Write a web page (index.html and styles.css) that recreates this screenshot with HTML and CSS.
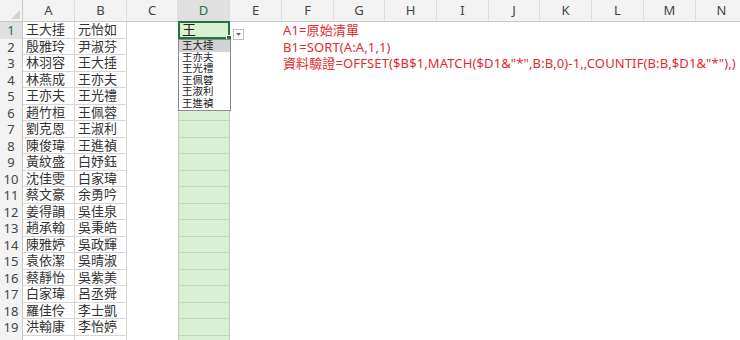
FILE: index.html
```html
<!DOCTYPE html>
<html>
	<head>
		<meta charset="utf-8">
		<title>資料驗證 - 下拉清單</title>
		<link rel="stylesheet" href="styles.css">
	</head>
	<body>
		<div class="sheet">
			<div class="colhdr">
				<div class="corner"><svg width="9" height="9" viewBox="0 0 9 9"><polygon points="9,0 9,9 0,9" fill="#d2d2d2"/></svg></div>
				<div>A</div><div>B</div><div>C</div><div class="on">D</div><div>E</div><div>F</div><div>G</div>
				<div>H</div><div>I</div><div>J</div><div>K</div><div>L</div><div>M</div><div>N</div>
			</div>

			<div class="row">
				<div class="rh on">1</div><div class="c">王大捶</div><div class="c">元怡如</div><div></div>
				<div class="d cur">王
					<span class="btn"><svg width="5" height="3" viewBox="0 0 5 3"><polygon points="0,0 5,0 2.5,3" fill="#666"/></svg></span>
					<ul class="dd">
						<li class="hi">王大捶</li>
						<li>王亦夫</li>
						<li>王光禮</li>
						<li>王佩蓉</li>
						<li>王淑利</li>
						<li>王進禎</li>
					</ul>
				</div>
				<div class="note">A1=原始清單</div>
			</div>
			<div class="row">
				<div class="rh">2</div><div class="c">殷雅玲</div><div class="c">尹淑芬</div><div></div><div class="d"></div>
				<div class="note">B1=SORT(A:A,1,1)</div>
			</div>
			<div class="row">
				<div class="rh">3</div><div class="c">林羽容</div><div class="c">王大捶</div><div></div><div class="d"></div>
				<div class="note">資料驗證=OFFSET($B$1,MATCH($D1&amp;"*",B:B,0)-1,,COUNTIF(B:B,$D1&amp;"*"),)</div>
			</div>
			<div class="row"><div class="rh">4</div><div class="c">林燕成</div><div class="c">王亦夫</div><div></div><div class="d"></div></div>
			<div class="row"><div class="rh">5</div><div class="c">王亦夫</div><div class="c">王光禮</div><div></div><div class="d"></div></div>
			<div class="row"><div class="rh">6</div><div class="c">趙竹桓</div><div class="c">王佩蓉</div><div></div><div class="d"></div></div>
			<div class="row"><div class="rh">7</div><div class="c">劉克恩</div><div class="c">王淑利</div><div></div><div class="d"></div></div>
			<div class="row"><div class="rh">8</div><div class="c">陳俊瑋</div><div class="c">王進禎</div><div></div><div class="d"></div></div>
			<div class="row"><div class="rh">9</div><div class="c">黃紋盛</div><div class="c">白妤鈺</div><div></div><div class="d"></div></div>
			<div class="row"><div class="rh">10</div><div class="c">沈佳雯</div><div class="c">白家瑋</div><div></div><div class="d"></div></div>
			<div class="row"><div class="rh">11</div><div class="c">蔡文豪</div><div class="c">余勇吟</div><div></div><div class="d"></div></div>
			<div class="row"><div class="rh">12</div><div class="c">姜得韻</div><div class="c">吳佳泉</div><div></div><div class="d"></div></div>
			<div class="row"><div class="rh">13</div><div class="c">趙承翰</div><div class="c">吳秉皓</div><div></div><div class="d"></div></div>
			<div class="row"><div class="rh">14</div><div class="c">陳雅婷</div><div class="c">吳政輝</div><div></div><div class="d"></div></div>
			<div class="row"><div class="rh">15</div><div class="c">袁依潔</div><div class="c">吳晴淑</div><div></div><div class="d"></div></div>
			<div class="row"><div class="rh">16</div><div class="c">蔡靜怡</div><div class="c">吳紫美</div><div></div><div class="d"></div></div>
			<div class="row"><div class="rh">17</div><div class="c">白家瑋</div><div class="c">呂丞舜</div><div></div><div class="d"></div></div>
			<div class="row"><div class="rh">18</div><div class="c">羅佳伶</div><div class="c">李士凱</div><div></div><div class="d"></div></div>
			<div class="row"><div class="rh">19</div><div class="c">洪翰康</div><div class="c">李怡婷</div><div></div><div class="d"></div></div>
			<div class="row"><div class="rh"></div><div class="c"></div><div class="c"></div><div></div><div class="d"></div></div>
		</div>
	</body>
</html>
```

FILE: styles.css
```css
/*   #f3f3f3; /*header gray*/
/*   #217346; /*excel green*/
/*   #daf0d2; /*fill green*/
body{
	margin:0;
	width:740px;
	height:340px;
	overflow:hidden;
	background-color:#fff;
	font-family:"Noto Sans","Noto Sans CJK TC",sans-serif;
}
.colhdr{
	display:grid;
	grid-template-columns:23px 52px 52px 51px 52px 52px 52px 51px 52px 52px 51px 52px 52px 52px 52px;
	height:22px;
	box-sizing:border-box;
	background-color:#f3f3f3;
	border-bottom:1px solid #c8c8c8;
}
.colhdr div{
	border-right:1px solid #dedede;
	text-align:center;
	font-size:13px;
	line-height:21px;
	color:#444;
}
.colhdr .corner{
	display:flex;
	align-items:flex-end;
	justify-content:flex-end;
	padding:0 2px 2px 0;
	border-right:1px solid #c8c8c8;
}
.colhdr .on{
	background-color:#e0e0e0;
	color:#1f6e43;
}
.row{
	display:grid;
	grid-template-columns:23px 52px 52px 51px 52px 1fr;
	height:16.5px;
}
.row > div{
	box-sizing:border-box;
	min-width:0;
}
.rh{
	background-color:#f3f3f3;
	border-right:1px solid #c8c8c8;
	text-align:center;
	font-size:13px;
	line-height:16.5px;
	color:#444;
}
.rh.on{
	background-color:#e0e0e0;
	color:#1f6e43;
}
.c{
	border-right:1px solid #d6d6d6;
	border-bottom:1px solid #d6d6d6;
	padding-left:3px;
	font-size:13px;
	line-height:15.5px;
	color:#333;
	white-space:nowrap;
}
.d{
	background-color:#daf0d2;
	border-left:1px solid #bcd4b3;
	border-right:1px solid #bcd4b3;
	border-bottom:1px solid #c2d9b9;
}
.cur{
	position:relative;
	z-index:3;
	padding-left:3px;
	font-size:14px;
	line-height:15.5px;
	color:#222;
}
.cur::before{
	content:"";
	position:absolute;
	top:-1px;
	left:-1px;
	right:-1px;
	bottom:-1px;
	border:2px solid #217346;
}
.cur::after{
	content:"";
	position:absolute;
	right:-3px;
	bottom:-3px;
	width:4px;
	height:4px;
	background-color:#217346;
	border:1px solid #fff;
}
.btn{
	position:absolute;
	left:54px;
	top:7px;
	width:9px;
	height:9px;
	display:flex;
	align-items:center;
	justify-content:center;
	background-color:#fff;
	border:1px solid #c0c0c0;
}
.dd{
	position:absolute;
	top:17px;
	left:-1px;
	width:53px;
	margin:0;
	padding:0;
	list-style:none;
	box-sizing:border-box;
	background-color:#fff;
	border:1px solid #8c8c8c;
	font-size:10.5px;
	line-height:11.6px;
	color:#222;
	z-index:4;
}
.dd li{
	padding-left:3px;
}
.dd .hi{
	background-color:#d3d3d3;
}
.note{
	padding-left:53px;
	font-size:13px;
	letter-spacing:0.12px;
	line-height:16.5px;
	color:#e42a30;
	white-space:nowrap;
}
```
